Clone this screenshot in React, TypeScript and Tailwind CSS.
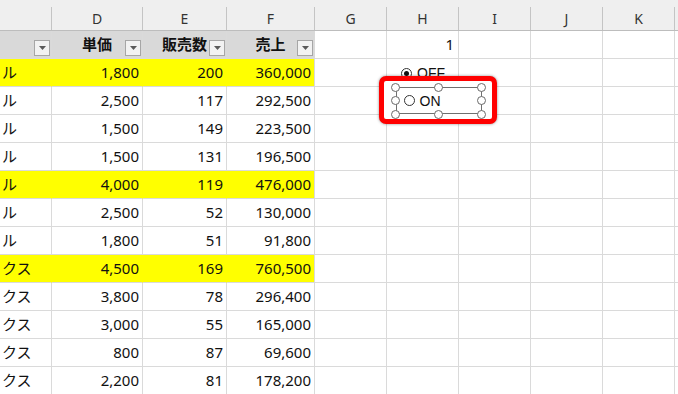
import React from 'react';

type Row = { c: string; d: string; e: string; f: string; hi?: boolean };

const rows: Row[] = [
  { c: 'ル', d: '1,800', e: '200', f: '360,000', hi: true },
  { c: 'ル', d: '2,500', e: '117', f: '292,500' },
  { c: 'ル', d: '1,500', e: '149', f: '223,500' },
  { c: 'ル', d: '1,500', e: '131', f: '196,500' },
  { c: 'ル', d: '4,000', e: '119', f: '476,000', hi: true },
  { c: 'ル', d: '2,500', e: '52', f: '130,000' },
  { c: 'ル', d: '1,800', e: '51', f: '91,800' },
  { c: 'クス', d: '4,500', e: '169', f: '760,500', hi: true },
  { c: 'クス', d: '3,800', e: '78', f: '296,400' },
  { c: 'クス', d: '3,000', e: '55', f: '165,000' },
  { c: 'クス', d: '800', e: '87', f: '69,600' },
  { c: 'クス', d: '2,200', e: '81', f: '178,200' },
];

const letters = ['', 'D', 'E', 'F', 'G', 'H', 'I', 'J', 'K', ''];
const blanks = [0, 1, 2, 3, 4, 5];

const FilterButton = () => (
  <span className="absolute right-[1px] top-[9px] w-4 h-4 border border-[#a6a6a6] bg-[#f2f2f2] flex items-center justify-center">
    <svg width="7" height="4" viewBox="0 0 7 4">
      <path d="M0 0 L7 0 L3.5 4 Z" fill="#5a5a5a" />
    </svg>
  </span>
);

const Handle = () => <span className="w-[9px] h-[9px] shrink-0 rounded-full border-[1.5px] border-[#6a6a6a] bg-white" />;

const Radio = ({ checked }: { checked?: boolean }) => (
  <span className="w-[11px] h-[11px] shrink-0 rounded-full border border-[#333] bg-white flex items-center justify-center">
    {checked && <span className="w-[5px] h-[5px] rounded-full bg-[#111]" />}
  </span>
);

export default function App() {
  const cell = 'h-[28px] border-r border-b border-[#dadada] flex items-center';
  const label = { fontFamily: '"Liberation Sans", sans-serif' };

  return (
    <div
      className="relative w-[678px] h-[394px] overflow-hidden bg-white text-[#111]"
      style={{ fontFamily: '"Noto Sans", "Noto Sans CJK JP", sans-serif' }}
    >
      <div className="grid grid-cols-[52px_91px_84px_88px_72px_72px_72px_72px_72px_1fr]">
        {/* column letters */}
        {letters.map((l, i) => (
          <div key={'h' + i} className="h-[31px] bg-[#efefef] border-b border-[#bdbdbd] pt-[7px]">
            <div className={`h-full flex items-center justify-center text-[14px] text-[#333] ${i < 9 ? 'border-r border-[#c4c4c4]' : ''}`}>
              {l}
            </div>
          </div>
        ))}

        {/* table header row */}
        <div className={`${cell} relative bg-[#d9d9d9] border-[#d9d9d9]`}>
          <FilterButton />
        </div>
        {['単価', '販売数', '売上'].map((t, i) => (
          <div
            key={t}
            className={`${cell} relative justify-center bg-[#d9d9d9] font-bold text-[15px] ${i === 2 ? 'border-b-[#d9d9d9]' : 'border-[#d9d9d9]'}`}
          >
            <span className="-mt-[1px]">{t}</span>
            <FilterButton />
          </div>
        ))}
        {blanks.map((b) => (
          <div key={'t' + b} className={`${cell} justify-end pr-[4px] text-[15px]`}>
            {b === 1 ? '1' : ''}
          </div>
        ))}

        {/* data rows */}
        {rows.map((r, ri) => {
          const fill = r.hi ? 'bg-[#ffff00] border-r-[#ffff00]' : '';
          return (
            <React.Fragment key={ri}>
              <div className={`${cell} ${fill} pl-[2px] text-[15px] overflow-hidden whitespace-nowrap`}>{r.c}</div>
              <div className={`${cell} ${fill} justify-end pr-[3px] text-[15px]`}>{r.d}</div>
              <div className={`${cell} ${fill} justify-end pr-[3px] text-[15px]`}>{r.e}</div>
              <div className={`${cell} ${r.hi ? 'bg-[#ffff00]' : ''} justify-end pr-[3px] text-[15px]`}>{r.f}</div>
              {blanks.map((b) => (
                <div key={b} className={cell} />
              ))}
            </React.Fragment>
          );
        })}
      </div>

      {/* form controls floating over the sheet */}
      <div className="absolute left-[379px] top-[68px] flex flex-col">
        {/* OFF option, lower half hidden under the red frame */}
        <div className="h-[8px] flex items-start gap-[5px] pl-[22px] overflow-visible">
          <Radio checked />
          <span className="text-[14px] leading-none -mt-[2px]" style={label}>OFF</span>
        </div>

        {/* red highlight frame around the selected ON option */}
        <div className="relative z-10 w-[118px] h-[48px] rounded-[7px] border-[5px] border-[#ff0000] bg-white shadow-[0_0_3px_rgba(0,0,0,0.45)] pl-[7px] pt-[1.5px]">
          <div className="grid w-[95px] h-[36px]">
            <div className="[grid-area:1/1] m-[4.5px] border border-[#707070] flex items-center gap-[5px] pl-[7px]">
              <Radio />
              <span className="text-[14px] leading-none" style={label}>ON</span>
            </div>
            <div className="[grid-area:1/1] flex flex-col justify-between">
              <div className="flex justify-between"><Handle /><Handle /><Handle /></div>
              <div className="flex justify-between"><Handle /><Handle /></div>
              <div className="flex justify-between"><Handle /><Handle /><Handle /></div>
            </div>
          </div>
        </div>
      </div>
    </div>
  );
}
